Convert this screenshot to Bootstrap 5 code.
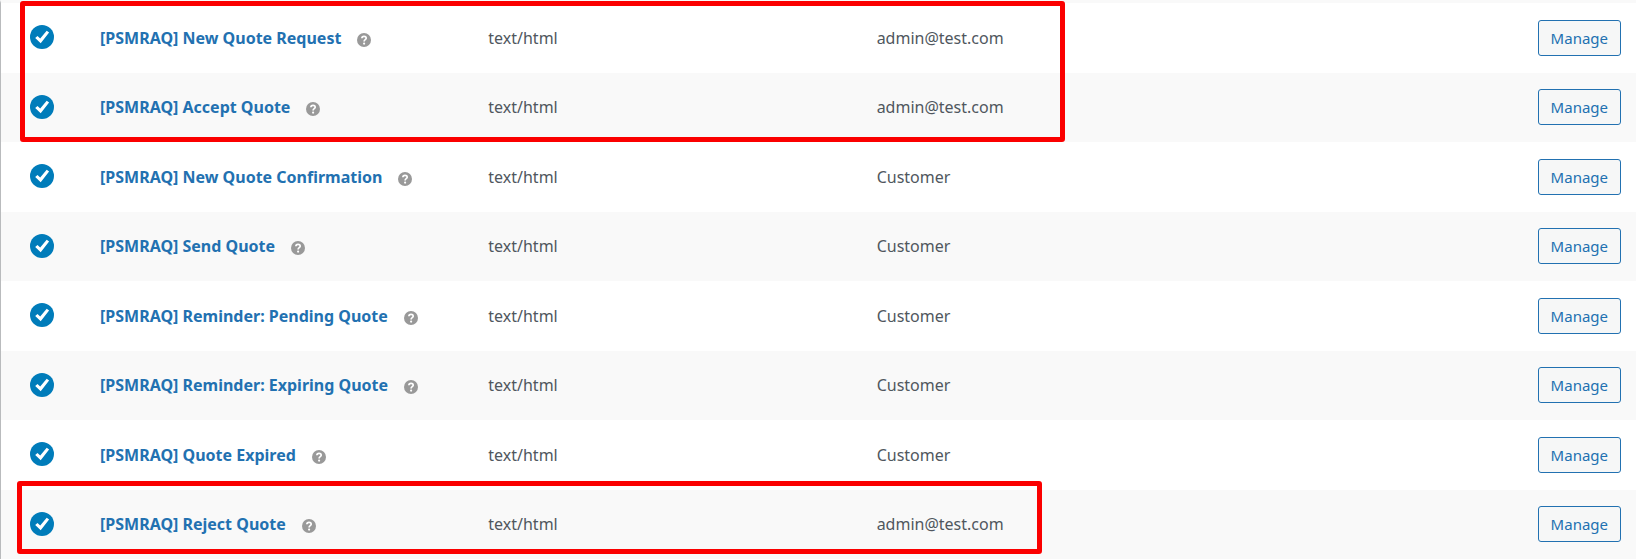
<!DOCTYPE html>
<html lang="en">
<head>
<meta charset="utf-8">
<meta name="viewport" content="width=device-width, initial-scale=1">
<title>Email notifications</title>
<link href="https://cdn.jsdelivr.net/npm/bootstrap@5.3.0/dist/css/bootstrap.min.css" rel="stylesheet">
<style>
  body { font-family: "Noto Sans", "Open Sans", sans-serif; font-size: 16px; line-height: 24px; color: #50575e; background: #fff; }
  .email-panel { border-left: 1px solid #b9bbbd; border-top: 3px solid #f9f9f9; }
  .email-table { table-layout: fixed; color: #50575e; }
  .email-table td { padding: 0 15px 1px; height: 70px; white-space: nowrap; }
  .email-table tr:nth-child(even) td { height: 69px; background: #f9f9f9; }
  .email-table td.status-cell { padding: 0 0 2px 29px; }
  .col-status { width: 84px; }
  .col-field { width: 23.75%; }
  .email-name { color: #2271b1; font-weight: 700; text-decoration: none; }
  .help-icon { margin-top: 4px; }
  .btn-manage { height: 36px; padding: 0 12px; border: 1px solid #2271b1; border-radius: 3px; background: #f6f7f7; color: #2271b1; font-size: 15px; line-height: 34px; }
  .btn-manage:hover { background: #f0f0f1; border-color: #0a4b78; color: #0a4b78; }
  .callout { border: 5px solid #fb0000; border-radius: 3px; pointer-events: none; }
  .callout-requests { top: -2px; left: 19px; width: 63.9%; height: 141px; }
  .callout-reject { bottom: 5px; left: 16px; width: 62.7%; height: 73px; }
</style>
</head>
<body>
<svg class="d-none" aria-hidden="true">
  <symbol id="icon-check" viewBox="0 0 24 24">
    <circle cx="12" cy="12" r="12" fill="#007cba"/>
    <path d="M5.2 13.1 7.5 10.9 10.2 13.5 16.7 5.7 19.1 7.5 10.7 18.2Z" fill="#fff"/>
  </symbol>
  <symbol id="icon-help" viewBox="0 0 14 14">
    <circle cx="7" cy="7" r="7" fill="#999"/>
    <path d="M4.9 5.3C4.9 2.7 9.2 2.7 9.2 5.2 9.2 6.7 7.1 6.7 7.1 8.5" fill="none" stroke="#fff" stroke-width="1.7"/>
    <circle cx="7.1" cy="10.6" r="1.1" fill="#fff"/>
  </symbol>
</svg>
<main class="email-panel position-relative">
  <table class="email-table table table-borderless align-middle mb-0 w-100">
    <colgroup><col class="col-status"><col class="col-field"><col class="col-field"><col class="col-field"><col></colgroup>
    <tbody>
      <tr><td class="status-cell"><svg class="d-block" width="24" height="24" role="img" aria-label="Enabled"><use href="#icon-check"/></svg></td><td><div class="d-flex align-items-center gap-3"><a class="email-name" href="#">[PSMRAQ] New Quote Request</a><svg class="help-icon" width="14" height="14" role="img" aria-label="Help"><use href="#icon-help"/></svg></div></td><td>text/html</td><td>admin@test.com</td><td class="text-end"><button type="button" class="btn btn-manage">Manage</button></td></tr>
      <tr><td class="status-cell"><svg class="d-block" width="24" height="24" role="img" aria-label="Enabled"><use href="#icon-check"/></svg></td><td><div class="d-flex align-items-center gap-3"><a class="email-name" href="#">[PSMRAQ] Accept Quote</a><svg class="help-icon" width="14" height="14" role="img" aria-label="Help"><use href="#icon-help"/></svg></div></td><td>text/html</td><td>admin@test.com</td><td class="text-end"><button type="button" class="btn btn-manage">Manage</button></td></tr>
      <tr><td class="status-cell"><svg class="d-block" width="24" height="24" role="img" aria-label="Enabled"><use href="#icon-check"/></svg></td><td><div class="d-flex align-items-center gap-3"><a class="email-name" href="#">[PSMRAQ] New Quote Confirmation</a><svg class="help-icon" width="14" height="14" role="img" aria-label="Help"><use href="#icon-help"/></svg></div></td><td>text/html</td><td>Customer</td><td class="text-end"><button type="button" class="btn btn-manage">Manage</button></td></tr>
      <tr><td class="status-cell"><svg class="d-block" width="24" height="24" role="img" aria-label="Enabled"><use href="#icon-check"/></svg></td><td><div class="d-flex align-items-center gap-3"><a class="email-name" href="#">[PSMRAQ] Send Quote</a><svg class="help-icon" width="14" height="14" role="img" aria-label="Help"><use href="#icon-help"/></svg></div></td><td>text/html</td><td>Customer</td><td class="text-end"><button type="button" class="btn btn-manage">Manage</button></td></tr>
      <tr><td class="status-cell"><svg class="d-block" width="24" height="24" role="img" aria-label="Enabled"><use href="#icon-check"/></svg></td><td><div class="d-flex align-items-center gap-3"><a class="email-name" href="#">[PSMRAQ] Reminder: Pending Quote</a><svg class="help-icon" width="14" height="14" role="img" aria-label="Help"><use href="#icon-help"/></svg></div></td><td>text/html</td><td>Customer</td><td class="text-end"><button type="button" class="btn btn-manage">Manage</button></td></tr>
      <tr><td class="status-cell"><svg class="d-block" width="24" height="24" role="img" aria-label="Enabled"><use href="#icon-check"/></svg></td><td><div class="d-flex align-items-center gap-3"><a class="email-name" href="#">[PSMRAQ] Reminder: Expiring Quote</a><svg class="help-icon" width="14" height="14" role="img" aria-label="Help"><use href="#icon-help"/></svg></div></td><td>text/html</td><td>Customer</td><td class="text-end"><button type="button" class="btn btn-manage">Manage</button></td></tr>
      <tr><td class="status-cell"><svg class="d-block" width="24" height="24" role="img" aria-label="Enabled"><use href="#icon-check"/></svg></td><td><div class="d-flex align-items-center gap-3"><a class="email-name" href="#">[PSMRAQ] Quote Expired</a><svg class="help-icon" width="14" height="14" role="img" aria-label="Help"><use href="#icon-help"/></svg></div></td><td>text/html</td><td>Customer</td><td class="text-end"><button type="button" class="btn btn-manage">Manage</button></td></tr>
      <tr><td class="status-cell"><svg class="d-block" width="24" height="24" role="img" aria-label="Enabled"><use href="#icon-check"/></svg></td><td><div class="d-flex align-items-center gap-3"><a class="email-name" href="#">[PSMRAQ] Reject Quote</a><svg class="help-icon" width="14" height="14" role="img" aria-label="Help"><use href="#icon-help"/></svg></div></td><td>text/html</td><td>admin@test.com</td><td class="text-end"><button type="button" class="btn btn-manage">Manage</button></td></tr>
    </tbody>
  </table>
  <div class="callout callout-requests position-absolute"></div>
  <div class="callout callout-reject position-absolute"></div>
</main>
<script src="https://cdn.jsdelivr.net/npm/bootstrap@5.3.0/dist/js/bootstrap.bundle.min.js"></script>
</body>
</html>
